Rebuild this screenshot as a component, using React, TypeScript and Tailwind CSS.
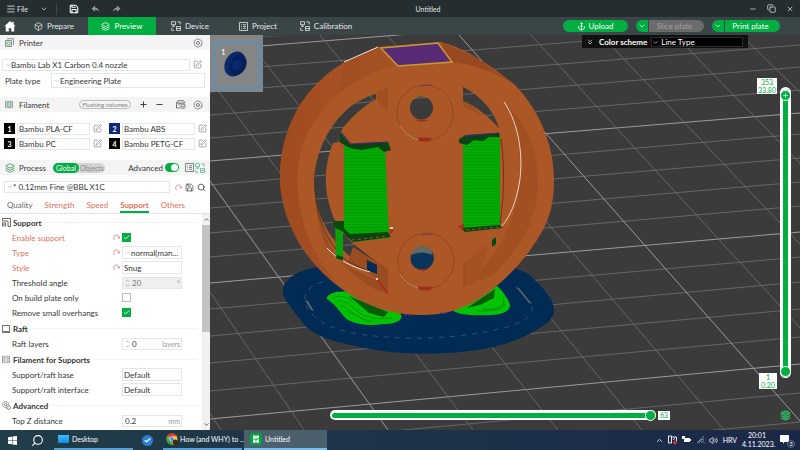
import { useState } from "react"
import type { ReactNode } from "react"
import {
  Anchor, Box, Check, ChevronDown, ChevronsDown, ChevronUp, Hexagon, Layers, Menu, Minus,
  Plus, Save, Search, SquarePen, Volume2, X, Copy,
} from "lucide-react"

const EXTRUSION = "#ab5726"

interface Filament {
  id: number
  name: string
  swatch: string
}

const filaments: Filament[] = [
  { id: 1, name: "Bambu PLA-CF", swatch: "bg-black" },
  { id: 2, name: "Bambu ABS", swatch: "bg-[#0b2a78]" },
  { id: 3, name: "Bambu PC", swatch: "bg-black" },
  { id: 4, name: "Bambu PETG-CF", swatch: "bg-black" },
]

const settingTabs = [
  { name: "Quality", changed: false },
  { name: "Strength", changed: true },
  { name: "Speed", changed: true },
  { name: "Support", changed: true },
  { name: "Others", changed: true },
]

export default function App() {
  return (
    <div className="flex h-screen flex-col overflow-hidden bg-[#3b3b3b] font-[Lato,'Open_Sans',sans-serif] text-[8px] leading-[12px] text-[#363636]">
      <TitleBar />
      <NavBar />
      <div className="flex min-h-0 flex-1">
        <SidePanel />
        <Viewport />
      </div>
      <TaskBar />
    </div>
  )
}

function TitleBar() {
  return (
    <header className="grid h-[17px] shrink-0 grid-cols-[1fr_auto_1fr] items-center bg-[#242d30] px-1.5 text-[7px] text-gray-200">
      <div className="flex items-center">
        <button className="flex items-center gap-px"><Menu size={10} />File</button>
        <button aria-label="File menu" className="ml-3"><ChevronDown size={8} /></button>
        <span className="mx-2 h-3 w-px bg-[#3d484b]" />
        <button aria-label="Save" className="ml-1"><Save size={10} className="text-white" strokeWidth={2.5} /></button>
        <button aria-label="Undo" className="ml-3"><ArrowIcon /></button>
        <button aria-label="Redo" className="ml-3 -scale-x-100"><ArrowIcon /></button>
      </div>
      <span className="pl-14">Untitled</span>
      <div className="flex items-center justify-end gap-[10px]">
        <button aria-label="Minimize"><Minus size={8} /></button>
        <button aria-label="Restore"><Copy size={9} /></button>
        <button aria-label="Close"><X size={8} /></button>
      </div>
    </header>
  )
}

function ArrowIcon() {
  return (
    <svg width="9" height="8" viewBox="0 0 10 8" fill="#8b9496">
      <path d="M4.500 0 .5 3.600l4 3.400V4.800c2-.1 3.300.6 4.300 2.400C8.800 4.600 7.400 2.500 4.500 2.300Z" />
    </svg>
  )
}

function NavBar() {
  return (
    <nav className="flex h-[18px] shrink-0 items-center bg-[#3a4547] pr-5 text-white">
      <button aria-label="Home" className="flex w-5 justify-center">
        <svg width="12" height="11" viewBox="0 0 12 11" fill="white">
          <path d="M6 0 .4 5.200h1.400V10.500h3V7.200h2.400v3.300h3V5.200h1.400L9.700 3.300V.8H8.300v1.300Z" />
        </svg>
      </button>
      <NavTab icon={<Box size={9} />} label="Prepare" />
      <NavTab icon={<Layers size={9} />} label="Preview" active />
      <NavTab icon={<DeviceIcon />} label="Device" />
      <NavTab icon={<ListIcon />} label="Project" />
      <NavTab icon={<DeviceIcon />} label="Calibration" />
      <div className="ml-auto flex gap-2">
        <button className="flex h-3 w-[65px] items-center justify-center gap-0.5 rounded-full bg-[#00ae42]">
          <Anchor size={9} />Upload
        </button>
        <SplitButton label="Slice plate" disabled />
        <SplitButton label="Print plate" />
      </div>
    </nav>
  )
}

function NavTab({ icon, label, active }: { icon: ReactNode; label: string; active?: boolean }) {
  return (
    <button className={`flex h-full w-[68px] items-center justify-center gap-1 ${active ? "bg-[#00ae42]" : "text-gray-200"}`}>
      {icon}
      {label}
    </button>
  )
}

function SplitButton({ label, disabled }: { label: string; disabled?: boolean }) {
  return (
    <div className="flex h-3 w-[68px] overflow-hidden rounded-full">
      <button aria-label={`${label} options`} className="flex w-3 items-center justify-center bg-[#00ae42]">
        <ChevronDown size={8} />
      </button>
      <button
        disabled={disabled}
        className={`ml-px flex-1 pr-1 ${disabled ? "bg-[#6b6b6b] text-[#a3a3a3]" : "bg-[#00ae42]"}`}
      >
        {label}
      </button>
    </div>
  )
}

function DeviceIcon() {
  return (
    <svg width="10" height="10" viewBox="0 0 10 10" fill="none" stroke="currentColor" strokeWidth=".8">
      <path d="M.5.700h4v3h-4zM2.500 3.700v1.500M1 5.300h3M6.300 1h3v2.500M.7 6.700v2.600h2.500M5.500 5.500h4v4h-4zM5.500 7.500h4" />
    </svg>
  )
}

function ListIcon() {
  return (
    <svg width="9" height="9" viewBox="0 0 9 9" fill="none" stroke="currentColor" strokeWidth=".8">
      <path d="M.5.500h8v8h-8zM2 2.700h.8M2 4.500h.8M2 6.300h.8M4 2.700h3M4 4.500h3M4 6.300h3" />
    </svg>
  )
}

function GearIcon() {
  return (
    <span className="relative flex items-center justify-center text-[#777]">
      <Hexagon size={10} strokeWidth={2} />
      <span className="absolute size-1 rounded-full border border-[#777]" />
    </span>
  )
}

function EditIcon() {
  return <SquarePen size={9} strokeWidth={1.8} className="text-[#808080]" />
}

function ResetIcon() {
  return (
    <svg width="7" height="7" viewBox="0 0 7 7" fill="none" stroke="#e58a78" strokeWidth=".9">
      <path d="M1.800 6A2.800 2.800 0 1 1 6.200 4M6.800 2.600 6.200 4.200 4.700 3.600" />
    </svg>
  )
}

function SidePanel() {
  return (
    <aside className="flex w-[210px] shrink-0 flex-col overflow-hidden bg-white">
      <SectionHeader icon={<PrinterIcon />} title="Printer">
        <button aria-label="Printer settings" className="ml-auto"><GearIcon /></button>
      </SectionHeader>
      <div className="flex flex-col gap-0.5 pt-2 pb-[9px]">
        <div className="flex h-[13px] items-center gap-[3px] pr-2 pl-0.5">
          <Dropdown label="Printer preset" value="Bambu Lab X1 Carbon 0.4 nozzle" arrow className="h-3 flex-1" />
          <button aria-label="Edit printer"><EditIcon /></button>
        </div>
        <div className="flex h-[15px] items-center pr-[5px] pl-[5px]">
          <span className="w-[46px]">Plate type</span>
          <Dropdown label="Plate type" value="Engineering Plate" arrow className="h-[15px] flex-1" />
        </div>
      </div>

      <SectionHeader icon={<SpoolIcon />} title="Filament">
        <button className="ml-auto h-[9px] w-[52px] rounded-full border border-[#bbb] text-[6px] leading-[7px] text-[#808080]">
          Flushing volumes
        </button>
        <button aria-label="Add filament" className="ml-2"><Plus size={9} strokeWidth={2.5} /></button>
        <button aria-label="Remove filament" className="ml-[7px]"><Minus size={9} strokeWidth={2.5} /></button>
        <button aria-label="AMS" className="ml-3"><AmsIcon /></button>
        <button aria-label="Filament settings" className="ml-[7px]"><GearIcon /></button>
      </SectionHeader>
      <div className="grid grid-cols-2 gap-x-1 gap-y-0.5 py-[10px] pl-1">
        {filaments.map((filament) => (
          <div key={filament.id} className="flex h-[13px] items-center gap-0.5">
            <span className={`flex size-[11px] items-center justify-center text-[7px] font-bold text-white ${filament.swatch}`}>
              {filament.id}
            </span>
            <Dropdown label={`Filament ${filament.id}`} value={filament.name} className="h-3 w-[73px]" />
            <button aria-label={`Edit filament ${filament.id}`} className="pl-px"><EditIcon /></button>
          </div>
        ))}
      </div>

      <ProcessHeader />
      <div className="flex h-6 items-center gap-[3px] pr-1 pl-1">
        <Dropdown label="Process preset" value="* 0.12mm Fine @BBL X1C" arrow className="h-3 w-[166px]" />
        <span className="flex flex-1 items-center justify-between pl-0.5">
          <button aria-label="Reset preset"><ResetIcon /></button>
          <button aria-label="Save preset"><Save size={9} strokeWidth={1.8} /></button>
          <button aria-label="Search settings"><Search size={9} /></button>
        </span>
      </div>
      <SettingTabs />
      <div className="flex min-h-0 flex-1">
        <Settings />
        <ScrollTrack />
      </div>
    </aside>
  )
}

function SectionHeader({ icon, title, children }: { icon: ReactNode; title: string; children?: ReactNode }) {
  return (
    <div className="flex h-[15px] shrink-0 items-center bg-[#f4f4f4] pr-[7px] pl-[5px]">
      <span className="flex w-[14px]">{icon}</span>
      <h2>{title}</h2>
      {children}
    </div>
  )
}

function ProcessHeader() {
  const [advanced, setAdvanced] = useState(true)

  return (
    <SectionHeader icon={<Layers size={10} className="text-[#3f8f60]" />} title="Process">
      <div className="ml-[7px] flex h-[10px] w-[52px] rounded-full bg-[#d4d4d4] text-[7px] leading-[10px]">
        <button className="w-[26px] rounded-full bg-[#00ae42] text-white">Global</button>
        <button className="flex-1 text-[#888]">Objects</button>
      </div>
      <label className="ml-auto flex items-center gap-0.5">
        Advanced
        <span className="relative flex">
          <input
            type="checkbox"
            checked={advanced}
            onChange={() => setAdvanced(!advanced)}
            className="peer h-[9px] w-[14px] appearance-none rounded-full bg-gray-300 checked:bg-[#00ae42]"
          />
          <span className="pointer-events-none absolute top-px left-px size-[7px] rounded-full bg-white peer-checked:left-1.5" />
        </span>
      </label>
      <button aria-label="Compare presets" className="ml-1.5 text-[#666]"><ListIcon /></button>
      <button aria-label="Object list" className="-mr-0.5 ml-px text-[#58b889]"><DeviceIcon /></button>
    </SectionHeader>
  )
}

function SettingTabs() {
  const [current, setCurrent] = useState("Support")

  return (
    <div className="flex h-[15px] shrink-0 items-end gap-3 border-b border-[#e4e4e4] pl-[7px]">
      {settingTabs.map(({ name, changed }) => (
        <button
          key={name}
          onClick={() => setCurrent(name)}
          className={`h-[14px] border-b-2 ${changed ? "text-[#e0735a]" : "text-[#666]"} ${current === name ? "border-[#00ae42] font-bold" : "border-transparent"}`}
        >
          {name}
        </button>
      ))}
    </div>
  )
}

interface DropdownProps {
  label: string
  value: string
  arrow?: boolean
  className?: string
}

function Dropdown({ label, value, arrow, className = "" }: DropdownProps) {
  return (
    <div className={`flex min-w-0 items-center border border-[#e6e6e6] bg-white ${arrow ? "pl-0.5" : "pl-px"} ${className}`}>
      {arrow && <ChevronDown size={6} strokeWidth={2} className="shrink-0 text-[#999]" />}
      <select aria-label={label} className="min-w-0 flex-1 appearance-none bg-transparent leading-[10px] outline-none">
        <option>{value}</option>
      </select>
    </div>
  )
}

function Settings() {
  return (
    <div className="flex flex-1 flex-col gap-px overflow-hidden pt-px">
      <Group icon={<SupportIcon />} title="Support">
        <CheckRow label="Enable support" changed defaultChecked />
        <Row label="Type" changed><Dropdown label="Type" value="normal(man..." arrow className="h-[13px] w-[60px]" /></Row>
        <Row label="Style" changed><Dropdown label="Style" value="Snug" className="h-[13px] w-[60px]" /></Row>
        <Row label="Threshold angle"><NumberBox label="Threshold angle" value="20" unit="°" disabled spin /></Row>
        <CheckRow label="On build plate only" />
        <CheckRow label="Remove small overhangs" defaultChecked />
      </Group>
      <Group icon={<span className="size-2 border border-b-2 border-[#777]" />} title="Raft">
        <Row label="Raft layers"><NumberBox label="Raft layers" value="0" unit="layers" spin /></Row>
      </Group>
      <Group icon={<SpoolIcon gray />} title="Filament for Supports">
        <Row label="Support/raft base"><Dropdown label="Support/raft base" value="Default" className="h-[13px] w-[60px]" /></Row>
        <Row label="Support/raft interface"><Dropdown label="Support/raft interface" value="Default" className="h-[13px] w-[60px]" /></Row>
      </Group>
      <Group icon={<CogsIcon />} title="Advanced">
        <Row label="Top Z distance"><NumberBox label="Top Z distance" value="0.2" unit="mm" /></Row>
      </Group>
    </div>
  )
}

function Group({ icon, title, children }: { icon: ReactNode; title: string; children: ReactNode }) {
  return (
    <section>
      <div className="flex h-[15px] items-center pl-0.5">
        <span className="flex w-[11px]">{icon}</span>
        <h3 className="font-bold">{title}</h3>
        <span className="mx-1 h-px flex-1 bg-[#f2f2f2]" />
      </div>
      {children}
    </section>
  )
}

function Row({ label, changed, children }: { label: string; changed?: boolean; children: ReactNode }) {
  return (
    <div className="flex h-[15px] items-center pl-3">
      <span className={`w-[101px] ${changed ? "text-[#e0735a]" : ""}`}>{label}</span>
      <span className="flex w-[9px]">{changed && <ResetIcon />}</span>
      {children}
    </div>
  )
}

function CheckRow({ label, changed, defaultChecked }: { label: string; changed?: boolean; defaultChecked?: boolean }) {
  return (
    <label className="flex h-[15px] items-center pl-3">
      <span className={`w-[101px] ${changed ? "text-[#e0735a]" : ""}`}>{label}</span>
      <span className="flex w-[9px]">{changed && <ResetIcon />}</span>
      <span className="relative flex items-center justify-center">
        <input
          type="checkbox"
          defaultChecked={defaultChecked}
          className="size-[9px] appearance-none border border-[#bbb] bg-white checked:border-[#00ae42] checked:bg-[#00ae42]"
        />
        <Check size={7} strokeWidth={3} className="pointer-events-none absolute text-white" />
      </span>
    </label>
  )
}

interface NumberBoxProps {
  label: string
  value: string
  unit: string
  disabled?: boolean
  spin?: boolean
}

function NumberBox({ label, value, unit, disabled, spin }: NumberBoxProps) {
  return (
    <span className={`flex h-3 w-[60px] items-center border border-[#e6e6e6] px-px ${disabled ? "bg-[#efefef] text-[#777]" : ""}`}>
      {spin && (
        <span className="flex w-[7px] flex-col items-center text-[#888]">
          <ChevronUp size={5} strokeWidth={3} />
          <ChevronDown size={5} strokeWidth={3} />
        </span>
      )}
      <input aria-label={label} defaultValue={value} disabled={disabled} className="w-0 min-w-0 flex-1 bg-transparent pl-px outline-none" />
      <span className="text-[7px] text-[#999]">{unit}</span>
    </span>
  )
}

function ScrollTrack() {
  return (
    <div className="flex w-2 flex-col items-center bg-[#f1f1f1] py-0.5 text-[#555]">
      <ChevronUp size={7} strokeWidth={3} />
      <span className="mt-0.5 h-[107px] w-full bg-[#c3c3c3]" />
      <ChevronDown size={7} strokeWidth={3} className="mt-auto" />
    </div>
  )
}

function PrinterIcon() {
  return (
    <svg width="9" height="9" viewBox="0 0 9 9" fill="none" stroke="#777" strokeWidth=".8">
      <path d="M.5 2.500h6v6h-6zM2 .700h6.500V7" />
      <path d="M2 4h3v3H2z" stroke="#42a86c" />
    </svg>
  )
}

function SpoolIcon({ gray }: { gray?: boolean }) {
  return (
    <svg width="8" height="9" viewBox="0 0 8 9" fill="none" stroke="#888" strokeWidth=".8">
      <path d="M.5 1v7M2 .500v8M6 .500v8M7.500 1v7" />
      <path d="M3 1.500h2v6H3z" stroke={gray ? "#aaa" : "#42a86c"} />
    </svg>
  )
}

function AmsIcon() {
  return (
    <svg width="10" height="9" viewBox="0 0 10 9" fill="none" stroke="#666" strokeWidth=".9">
      <path d="M.5 3 2 .700h5.500L9 3M.5 3h8.500M.5 3v5h4M3 3v2.500M5 3v1" />
      <circle cx="7" cy="6.200" r="2.200" />
      <path d="m6 6.200.8.800L8 5.700" />
    </svg>
  )
}

function SupportIcon() {
  return (
    <svg width="9" height="9" viewBox="0 0 9 9" fill="none" stroke="#555" strokeWidth=".9">
      <path d="M.5.500h8v8h-2.500V3H.5zM.5 4.300v4.200M2 4.300v4.200M3.500 4.300v4.200" />
    </svg>
  )
}

function CogsIcon() {
  return (
    <svg width="9" height="9" viewBox="0 0 9 9" fill="none" stroke="#666" strokeWidth=".8">
      <circle cx="3.700" cy="3.700" r="3" strokeDasharray="1.500 .500" />
      <circle cx="3.700" cy="3.700" r="1.200" />
      <circle cx="6.600" cy="6.600" r="1.800" fill="white" />
    </svg>
  )
}

function Viewport() {
  const [layer, setLayer] = useState(353)
  const [bottomLayer, setBottomLayer] = useState(1)
  const [step, setStep] = useState(63)

  return (
    <main className="relative min-w-0 flex-1 overflow-hidden">
      <Scene />
      <button aria-label="Plate 1" className="absolute top-0 left-0 h-[57px] w-[53px] bg-[#858585] pt-[3px] pl-[3px]">
        <span className="relative block h-[47px] w-12 border-2 border-[#5991bc]">
          <span className="absolute top-0.5 left-1.5 text-[8px] text-white">1</span>
          <svg className="absolute inset-0" viewBox="0 0 44 43">
            <ellipse cx="20" cy="20" rx="10" ry="13" transform="rotate(28 20 20)" fill="#092a68" />
            <ellipse cx="23" cy="21" rx="8" ry="11" transform="rotate(28 23 21)" fill="#061f58" />
            <path d="m18 18 4-3 4 2-1 7-5 3-3-3z" fill="#0a2a70" />
          </svg>
        </span>
      </button>

      <div className="absolute top-0 right-[52px] flex h-[13px] w-[166px] items-center bg-[#101010] pt-px pr-[5px] pl-1 text-white">
        <ChevronsDown size={8} />
        <span className="ml-[5px] font-bold">Color scheme</span>
        <div className="ml-1 flex h-[10px] flex-1 items-center border border-[#2c2c2c] bg-black">
          <ChevronDown size={7} />
          <select aria-label="Color scheme" className="flex-1 appearance-none bg-transparent pl-0.5 leading-[8px]">
            <option>Line Type</option>
          </select>
        </div>
      </div>

      <div className="absolute top-[52px] right-[9px] bottom-[52px] w-[11px] rounded-full bg-white">
        <input
          type="range" aria-label="Top layer" min={1} max={353} value={layer}
          onChange={(e) => setLayer(Number(e.target.value))}
          className="absolute top-[3px] left-[3px] h-[calc(100%-4px)] w-[5px] appearance-none bg-[#00ae42] [direction:rtl] [writing-mode:vertical-lr] [&::-webkit-slider-thumb]:size-[11px] [&::-webkit-slider-thumb]:appearance-none [&::-webkit-slider-thumb]:rounded-full [&::-webkit-slider-thumb]:border [&::-webkit-slider-thumb]:border-white [&::-webkit-slider-thumb]:bg-[#00ae42]"
        />
        <input
          type="range" aria-label="Bottom layer" min={1} max={353} value={bottomLayer}
          onChange={(e) => setBottomLayer(Number(e.target.value))}
          className="pointer-events-none absolute top-[3px] left-[3px] h-[calc(100%-4px)] w-[5px] appearance-none bg-transparent [direction:rtl] [writing-mode:vertical-lr] [&::-webkit-slider-thumb]:pointer-events-auto [&::-webkit-slider-thumb]:size-[11px] [&::-webkit-slider-thumb]:appearance-none [&::-webkit-slider-thumb]:rounded-full [&::-webkit-slider-thumb]:border [&::-webkit-slider-thumb]:border-white [&::-webkit-slider-thumb]:bg-[#00ae42]"
        />
        <Plus size={7} strokeWidth={3} className="pointer-events-none absolute top-[5px] left-0.5 text-[#bdf0cf]" />
      </div>
      <output className="absolute top-[43px] right-[23px] w-5 bg-white text-center text-[7px] leading-[8px] text-[#00ae42]">
        {layer}<br />33.80
      </output>
      <output className="absolute right-[23px] bottom-[41px] w-[18px] bg-white text-center text-[7px] leading-[8px] text-[#00ae42]">
        {bottomLayer}<br />0.20
      </output>

      <div className="absolute right-[130px] bottom-[10px] left-[120px] flex items-center gap-0.5">
        <div className="flex h-[10px] flex-1 items-center rounded-full bg-white pl-0.5">
          <input
            type="range" aria-label="Step" min={0} max={63} value={step}
            onChange={(e) => setStep(Number(e.target.value))}
            className="h-[5px] w-full appearance-none rounded-full bg-[#00ae42] [&::-webkit-slider-thumb]:size-[11px] [&::-webkit-slider-thumb]:appearance-none [&::-webkit-slider-thumb]:rounded-full [&::-webkit-slider-thumb]:border [&::-webkit-slider-thumb]:border-white [&::-webkit-slider-thumb]:bg-[#00ae42]"
          />
        </div>
        <output className="h-[9px] w-3 bg-white text-center text-[7px] leading-[9px] text-[#00ae42]">{step}</output>
      </div>
      <button aria-label="Layer view" className="absolute right-[9px] bottom-[9px] text-[#3fc474]">
        <Layers size={11} fill="#1d9c50" />
      </button>
    </main>
  )
}

// [x1, y1, x2, y2, major]
const gridLines: [number, number, number, number, boolean?][] = [
  [210, 50, 800, 3, true], [210, 71, 800, 24], [210, 92, 800, 45], [210, 115, 800, 67], [210, 138, 800, 90],
  [210, 161, 800, 113, true], [210, 185, 800, 134], [210, 208, 800, 158], [210, 233, 800, 182], [210, 257, 800, 206],
  [210, 283, 800, 232, true], [210, 309, 800, 257], [210, 336, 800, 282], [210, 363, 800, 309], [210, 391, 800, 337],
  [210, 419, 800, 364, true], [210, 448, 800, 393], [210, 478, 800, 422],
  [210, 413, 221, 430], [210, 292, 304, 430], [210, 181, 388, 430, true], [210, 80, 473, 430], [243, 35, 558, 430],
  [320, 35, 642, 430], [387, 35, 724, 430], [459, 35, 808, 430, true], [531, 35, 894, 430], [601, 35, 977, 430],
  [675, 35, 1060, 430], [741, 35, 1147, 430],
]

function Scene() {
  return (
    <svg className="absolute inset-0 size-full" viewBox="210 35 590 395" preserveAspectRatio="xMidYMid slice" aria-hidden="true">
      <defs>
        <pattern id="layers" width="6" height="3" patternUnits="userSpaceOnUse">
          <path d="M0 0h6v3H0z" fill="#03aa03" />
          <path d="M0 2.500h6" stroke="#069406" strokeWidth=".6" />
        </pattern>
        <pattern id="ridges" width="2.400" height="6" patternUnits="userSpaceOnUse" patternTransform="rotate(-36)">
          <path d="M.5 0v6" stroke="#8b4119" strokeWidth=".7" />
        </pattern>
        <linearGradient id="side" x1="0" x2="1">
          <stop offset="0" stopColor="#a04a20" />
          <stop offset="1" stopColor="#ad5927" />
        </linearGradient>
      </defs>
      <path d="M210 35h590v395H210z" fill="#3b3b3b" />
      {gridLines.map(([x1, y1, x2, y2, major], i) => (
        <line key={i} x1={x1} y1={y1} x2={x2} y2={y2} stroke={major ? "#9a9c9a" : "#707270"} strokeWidth={major ? 1 : 0.8} />
      ))}
      <path d="M210 36h78l-78 2z" fill="#3c8b5f" />

      {/* brim */}
      <path d="M317 267C298 271 284 278 283 290C282 299 292 308 303 323C311 334 327 341 370 349C400 355 445 355 477 350C502 346 520 340 538 329C552 321 556 315 553 304C550 296 543 288 533 278C528 273 521 270 510 267Z" fill="#002b55" />
      <path d="M323 282C307 286 301 297 307 307C316 324 340 333 375 336C420 341 473 337 510 326C529 320 537 312 529 301" fill="none" stroke="#3d5c7b" strokeWidth=".8" strokeDasharray="5 6" />
      <path d="m305 300 3 1 6 10-3-1zM516 287l3 1 13 16-3-1z" fill="#5b6468" />

      {/* support feet */}
      <path d="M327 299C326 294 337 290 350 292L400 313C404 318 400 324 383 324C371 326 358 325 348 320C341 315 338 306 327 299Z" fill="#04c304" />
      <path d="M332 299C337 294 347 296 354 303M336 302C343 298 350 305 361 314C370 319 382 319 392 318M340 306C348 305 353 318 370 321M345 311C353 312 359 319 372 322" fill="none" stroke="#078c08" strokeWidth=".8" />
      <path d="M349 296 388 312 384 317 369 313Z" fill="#075c08" />
      <path d="M453 311 497 286C502 290 510 301 510 306C509 312 500 315 490 315C473 316 461 315 453 311Z" fill="#04c304" />
      <path d="M503 298c3 8-4 12-20 11M505 304c-2 6-14 7-28 7" fill="none" stroke="#078c08" strokeWidth=".8" />
      <path d="m467 308 28-19-1 9-14 7z" fill="#075c08" />

      {/* wheel body, the two side openings left unfilled */}
      <path
        fillRule="evenodd"
        fill={EXTRUSION}
        d="M280 178C280 150 287 128 302 103C314 85 327 73 345 62L378 47L441 42C462 47 487 62 515 85C540 111 554 145 554 180C554 207 548 223 537 240C526 257 515 270 500 283C482 299 458 316 420 315C378 315 343 294 321 271C295 244 281 209 280 178Z
          M376 94C333 105 309 158 315 195C319 224 336 248 362 266L377 273L377 262L352 243L338 227C328 207 319 178 333 143L338 142L341 131C348 120 361 108 376 99Z
          M463 87C482 96 494 112 499 128C490 119 479 107 463 101Z
          M410 108a11.500 11.500 0 1 0 23 0a11.500 11.500 0 1 0-23 0Z
          M411 258a11.500 11.500 0 1 0 23 0a11.500 11.500 0 1 0-23 0Z"
      />
      <path d="M280 178C280 132 300 88 345 62L378 47L398 66C350 75 302 116 298 170C295 218 312 253 337 284C302 260 280 216 280 178Z" fill="url(#side)" />
      <path d="M345 62 378 47 398 66C375 69 354 80 338 94Z" fill="url(#ridges)" />
      <path d="m441 42 36 16 38 27c-18-11-35-19-62-23l-9-3z" fill="#9c4b20" />
      <path d="m441 42 36 16 14 12-39-9z" fill="url(#ridges)" />
      <path d="M504 102C530 126 539 157 538 184C537 222 519 252 490 277C476 285 478 276 487 262C508 238 520 205 520 170C520 145 516 119 504 102Z" fill="#9d4a20" opacity=".6" />
      <path d="M315 195C316 220 322 236 327 248C345 268 362 273 376 280L388 294C356 284 322 254 315 195Z" fill="#974a1f" opacity=".8" />
      <path d="M353 247 388 269V294L377 278 348 262Z" fill="#994c20" />
      <path d="M367 260l10 5v9l-10-4z" fill="#002b55" />
      <path d="m377 92 11-4v23l-11-10zM463 101c10 4 16 10 20 15l-20-10z" fill="#964819" opacity=".5" />
      <path d="M464 263 487 245 480 280 464 287Z" fill="#964819" opacity=".3" />
      <path d="M464 263V287" stroke="#8d441b" strokeWidth=".8" />
      <path d="M315 178C314 215 326 242 347 261L370 272" fill="none" stroke="#522b18" strokeWidth=".8" />
      <path d="M327 248C338 260 352 267 370 272M344 62 378 47" fill="none" stroke="#efe2d9" strokeWidth="1" />
      <path d="M504 102C519 123 525 160 518 190C514 208 508 220 500 228" fill="none" stroke="#e8d7c8" strokeWidth="1" />
      <path d="M501 139C505 165 504 198 500 224" fill="none" stroke="#703315" strokeWidth="1" />
      <path d="m377 279 10 14" stroke="#a52b22" strokeWidth="1.500" />

      {/* top plate */}
      <path d="M381 48 438 43 452 62 398 66Z" fill="#592a76" stroke="#c99a2e" strokeWidth="1.500" />

      {/* hubs */}
      <path d="M412 253q1-6 10-6.500t10 6.500l1 3q-10-3-22 0z" fill="#656965" />
      <path d="M411 255q11-5 22 0c2 7-2 14.500-10.500 14.500S409 263 411 255z" fill="#0a355a" />
      <g fill="none" stroke="#8d441b" strokeWidth=".8">
        <circle cx="425" cy="113" r="28" />
        <circle cx="426" cy="261" r="28" />
      </g>
      <path d="M400 126q7 11 18 14M400 274q7 11 18 14" fill="none" stroke="#c79a7c" strokeWidth=".8" />
      <path d="M418 138h14l-3 3h-9zM418 287h15l-3 3h-10zM416 120q6 3 12 0M417 269q6 3 11 0" fill="#a22b22" stroke="#93301f" strokeWidth=".6" />
      <path d="M420 86l12-1M421 235l12-1M404 315h8M440 313h8" stroke="#6b2685" strokeWidth="1" strokeDasharray="3 1" />

      {/* tree supports */}
      <path d="M335 222h8v38l-7-2z" fill="#0aa00a" />
      <path d="M333 221h14l5 9-3 5-15-8zM337 255l6 2v4l-7-3zM492 240l4-3v7l-4 3z" fill="#064d0b" />
      <path d="M344 145h41l4 93-37 4-8-14z" fill="url(#layers)" />
      <path d="M463 136h37v90l-37 3z" fill="url(#layers)" />
      <path d="M340 132 350 144 388 142 391 150 384 152 378 147 361 150 350 148 339 142ZM459 139 466 135 499 133 500 137 489 137 483 141 474 140 467 145 459 143Z" fill="#0a4314" />
      <path d="M341 132 351 144 388 142M464 136l35-3" fill="none" stroke="#412079" strokeWidth="1" />
      <path d="m342 227 8 7 38-2 3 5-38 5-8-7zM461 228l39-3 3 3-38 4z" fill="#0a4314" />
      <path d="m352 240 36-4M466 230l34-3" stroke="#9b5222" strokeWidth="1" strokeDasharray="3 3" />
      <path d="m458 226 6-2-1 7zM390 229l3-1v4l-3 2z" fill="#a72f27" />
      <path d="M390 228h3M376 279h2" stroke="white" strokeWidth="1.500" />
    </svg>
  )
}

function TaskBar() {
  return (
    <footer className="flex h-5 shrink-0 items-center bg-linear-to-r from-[#213d48] to-[#1a2848] text-[7px] text-white">
      <button aria-label="Start" className="flex w-6 justify-center">
        <svg width="9" height="9" viewBox="0 0 9 9" fill="white"><path d="M0 1.200 4 .7v3.500H0zM4.500.600 9 0v4.200H4.500zM0 4.700h4v3.500L0 7.700zM4.500 4.700H9V9l-4.500-.6z" /></svg>
      </button>
      <button aria-label="Search" className="flex w-[26px] justify-center"><Search size={13} className="-scale-x-100" /></button>
      <button className="ml-1 flex h-full w-[79px] items-center gap-[3px] border-b-2 border-[#5b9fd0] pl-1">
        <span className="h-2 w-[11px] bg-linear-to-b from-[#3bc0ff] to-[#108bdf]" />Desktop
      </button>
      <button aria-label="Check app" className="ml-[9px] flex size-[11px] items-center justify-center rounded-full bg-[#2c7fd2]">
        <Check size={7} strokeWidth={4} />
      </button>
      <button className="ml-[10px] flex h-full w-[79px] items-center gap-0.5 border-b-2 border-[#5b9fd0] pl-[3px] whitespace-nowrap">
        <ChromeIcon />How (and WHY) to ...
      </button>
      <button className="ml-0.5 flex h-full w-[83px] items-center gap-[3px] border-b-2 border-[#76bdec] bg-[#4b606c] pl-[6px]">
        <BambuIcon />
        Untitled
      </button>
      <div className="ml-auto flex items-center">
        <ChevronUp size={9} />
        <svg className="ml-1" width="10" height="10" viewBox="0 0 10 10" fill="none" stroke="white" strokeWidth=".9">
          <path d="M.5 1h3v7h-3zM3.500 2h5v4M5 5l2-2" /><circle cx="7" cy="7.500" r="1.500" fill="#e62a34" stroke="#e62a34" />
        </svg>
        <svg className="ml-1" width="9" height="8" viewBox="0 0 9 8" fill="white"><path d="M2 2h6v4H2zM8 3h1v2H8zM0 0h3v3H0z" /></svg>
        <svg className="ml-1.5" width="8" height="8" viewBox="0 0 8 8" fill="none" stroke="#8b97a8" strokeWidth=".9">
          <path d="M0 7 7 0M2 7q0-3 5-4M4 7q1-2 3-2M6.500 7h1" />
        </svg>
        <Volume2 size={9} className="ml-1" />
        <span className="ml-[5px]">HRV</span>
        <time className="ml-[5px] w-[30px] text-center leading-[9px]">20:01<br />4.11.2023.</time>
        <button aria-label="Notifications" className="relative mr-[9px] ml-2 flex">
          <svg width="11" height="11" viewBox="0 0 11 11" fill="white"><path d="M0 0h9v7H4.500L3 9V7H0z" /></svg>
          <span className="absolute -right-1 -bottom-0.5 flex size-2 items-center justify-center rounded-full border border-gray-500 bg-[#1a2848] text-[6px]">3</span>
        </button>
      </div>
    </footer>
  )
}

function BambuIcon() {
  return (
    <svg width="12" height="12" viewBox="0 0 12 12" className="shrink-0">
      <rect width="12" height="12" rx="2" fill="#00a63f" />
      <path d="M3 2.500h2.700v4L3 5.400zM3 6.200l2.700 1v2.600H3zM6.300 2.500H9v2.600l-2.700 1zM6.300 6.900 9 5.900v3.900H6.300z" fill="white" />
    </svg>
  )
}

function ChromeIcon() {
  return (
    <svg width="12" height="12" viewBox="0 0 12 12" className="shrink-0">
      <circle cx="6" cy="6" r="5.500" fill="#fbc116" />
      <path d="M6 6 1.200 3.300A5.500 5.500 0 0 1 10.800 3.300H6z" fill="#e33b2e" />
      <path d="M6 6 6 11.500A5.500 5.500 0 0 1 1.200 3.300L4 7z" fill="#2da94f" />
      <circle cx="6" cy="6" r="2.500" fill="white" />
      <circle cx="6" cy="6" r="1.900" fill="#4285f4" />
      <circle cx="9" cy="9" r="2.500" fill="#3c2a20" />
    </svg>
  )
}
